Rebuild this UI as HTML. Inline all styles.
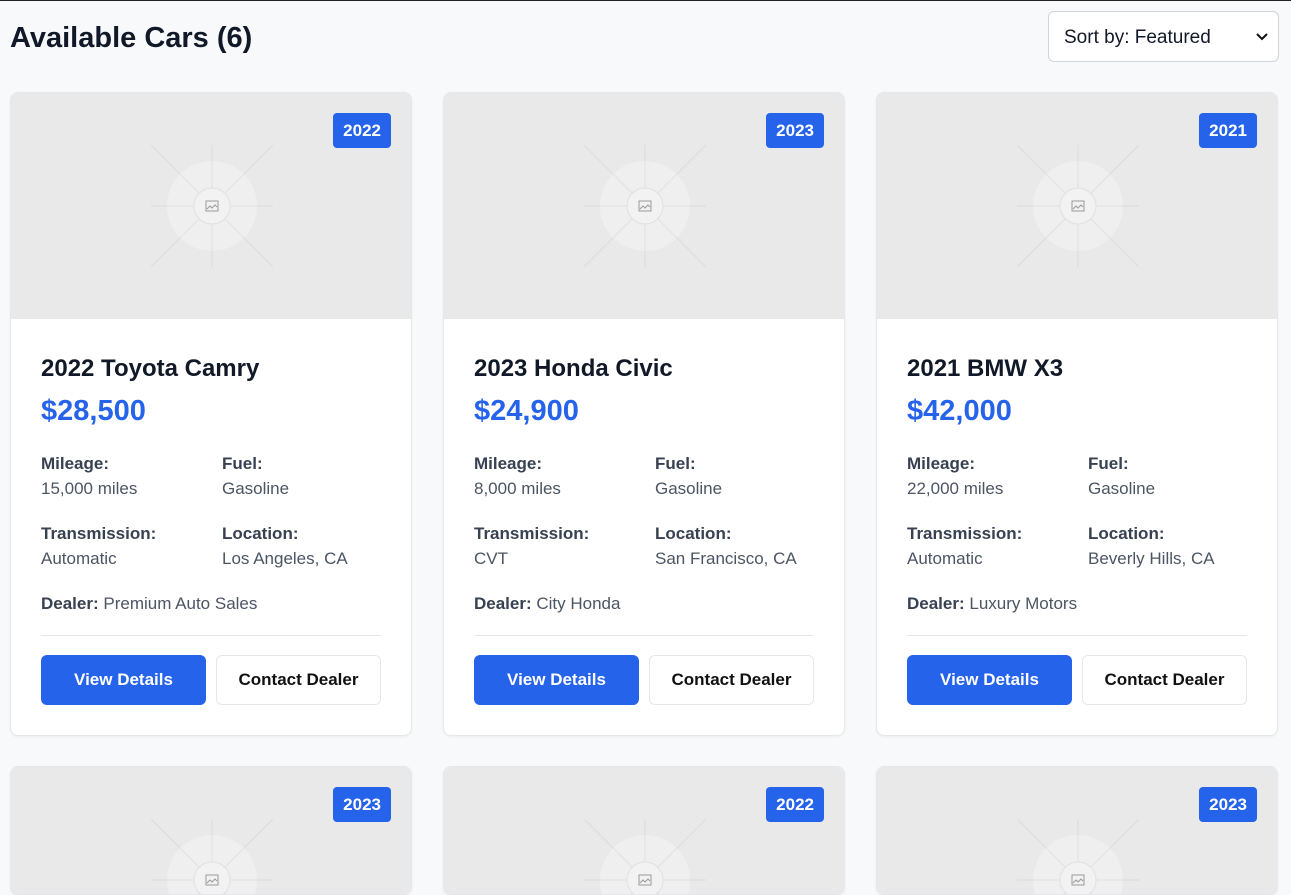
<!DOCTYPE html>
<html style="overflow:hidden;height:895px"><head><style>
*{box-sizing:border-box;margin:0;padding:0}
body{width:1291px;height:895px;overflow:hidden;background:#f8f9fb;font-family:"Liberation Sans",sans-serif;color:#111827;position:relative}
.top{position:absolute;left:0;top:0;width:1291px;height:1px;background:#222}
h1{position:absolute;left:10px;top:22px;font-size:29px;font-weight:bold;color:#111827}
.sort{position:absolute;left:1048px;top:11px;width:231px;height:51px;border:1px solid #d1d5db;border-radius:6px;background:#fff;font-size:19px;padding:15px 15px 0;color:#111827}
.sort svg{position:absolute;right:10px;top:21px}
.card{position:absolute;width:402px;height:644px;background:#fff;border:1px solid #e5e7eb;border-radius:8px;overflow:hidden;box-shadow:0 1px 2px rgba(0,0,0,.05)}
.img{height:226px;background:#e9e9e9;position:relative}
.img svg{position:absolute;left:140px;top:52px}
.badge{position:absolute;right:20px;top:20px;background:#2563eb;color:#fff;font-weight:bold;font-size:17px;padding:8px 10px 7px;border-radius:4px}
.body{padding:0 30px}
.t{font-size:24px;font-weight:bold;margin-top:36px;height:30px}
.p{font-size:29px;font-weight:bold;color:#2563eb;margin-top:10px;height:40px}
.g{display:grid;grid-template-columns:181px 1fr;row-gap:25px;margin-top:19px;font-size:17px;color:#4b5563}
.g b{display:block;color:#374151;margin-bottom:5px}
.d{margin-top:25px;font-size:17px;color:#4b5563}
.d b{color:#374151}
hr{border:none;border-top:1px solid #e5e7eb;margin-top:21px}
.btns{display:flex;gap:10px;margin-top:19px}
.btns div{width:166px;height:50px;border-radius:6px;display:flex;align-items:center;justify-content:center;font-size:17px;font-weight:bold}
.v{background:#2563eb;color:#fff}
.c{background:#fff;border:1px solid #e5e7eb;color:#111}
</style></head><body>
<div class="top"></div>
<h1>Available Cars (6)</h1>
<div class="sort">Sort by: Featured<svg width="12" height="8"><path d="M1 1l5 5 5-5" stroke="#111" stroke-width="2" fill="none"/></svg></div>

<div class="card" style="left:10px;top:92px"><div class="img"><svg width="122" height="122" viewBox="0 0 122 122"><g stroke="#dcdcdc" stroke-width="1" fill="none"><path d="M0 0L122 122M122 0L0 122M61 0V122M0 61H122"/></g><circle cx="61" cy="61" r="45" fill="#efefef"/><g stroke="#e2e2e2"><path d="M29 29L93 93M93 29L29 93M61 16V106M16 61H106"/></g><circle cx="61" cy="61" r="18" fill="#f2f2f2" stroke="#e0e0e0"/><rect x="55" y="56" width="12" height="10" fill="none" stroke="#999" stroke-width="1"/><path d="M56 64l3-3 2 2 3-3 2 2" stroke="#999" fill="none"/></svg><div class="badge">2022</div></div>
<div class="body"><div class="t">2022 Toyota Camry</div><div class="p">$28,500</div>
<div class="g"><div><b>Mileage:</b>15,000 miles</div><div><b>Fuel:</b>Gasoline</div><div><b>Transmission:</b>Automatic</div><div><b>Location:</b>Los Angeles, CA</div></div>
<div class="d"><b>Dealer:</b> Premium Auto Sales</div><hr><div class="btns"><div class="v">View Details</div><div class="c">Contact Dealer</div></div></div></div>

<div class="card" style="left:443px;top:92px"><div class="img"><svg width="122" height="122" viewBox="0 0 122 122"><g stroke="#dcdcdc" stroke-width="1" fill="none"><path d="M0 0L122 122M122 0L0 122M61 0V122M0 61H122"/></g><circle cx="61" cy="61" r="45" fill="#efefef"/><g stroke="#e2e2e2"><path d="M29 29L93 93M93 29L29 93M61 16V106M16 61H106"/></g><circle cx="61" cy="61" r="18" fill="#f2f2f2" stroke="#e0e0e0"/><rect x="55" y="56" width="12" height="10" fill="none" stroke="#999" stroke-width="1"/><path d="M56 64l3-3 2 2 3-3 2 2" stroke="#999" fill="none"/></svg><div class="badge">2023</div></div>
<div class="body"><div class="t">2023 Honda Civic</div><div class="p">$24,900</div>
<div class="g"><div><b>Mileage:</b>8,000 miles</div><div><b>Fuel:</b>Gasoline</div><div><b>Transmission:</b>CVT</div><div><b>Location:</b>San Francisco, CA</div></div>
<div class="d"><b>Dealer:</b> City Honda</div><hr><div class="btns"><div class="v">View Details</div><div class="c">Contact Dealer</div></div></div></div>

<div class="card" style="left:876px;top:92px"><div class="img"><svg width="122" height="122" viewBox="0 0 122 122"><g stroke="#dcdcdc" stroke-width="1" fill="none"><path d="M0 0L122 122M122 0L0 122M61 0V122M0 61H122"/></g><circle cx="61" cy="61" r="45" fill="#efefef"/><g stroke="#e2e2e2"><path d="M29 29L93 93M93 29L29 93M61 16V106M16 61H106"/></g><circle cx="61" cy="61" r="18" fill="#f2f2f2" stroke="#e0e0e0"/><rect x="55" y="56" width="12" height="10" fill="none" stroke="#999" stroke-width="1"/><path d="M56 64l3-3 2 2 3-3 2 2" stroke="#999" fill="none"/></svg><div class="badge">2021</div></div>
<div class="body"><div class="t">2021 BMW X3</div><div class="p">$42,000</div>
<div class="g"><div><b>Mileage:</b>22,000 miles</div><div><b>Fuel:</b>Gasoline</div><div><b>Transmission:</b>Automatic</div><div><b>Location:</b>Beverly Hills, CA</div></div>
<div class="d"><b>Dealer:</b> Luxury Motors</div><hr><div class="btns"><div class="v">View Details</div><div class="c">Contact Dealer</div></div></div></div>

<div class="card" style="left:10px;top:766px;height:129px"><div class="img"><svg width="122" height="122" viewBox="0 0 122 122"><g stroke="#dcdcdc" stroke-width="1" fill="none"><path d="M0 0L122 122M122 0L0 122M61 0V122M0 61H122"/></g><circle cx="61" cy="61" r="45" fill="#efefef"/><g stroke="#e2e2e2"><path d="M29 29L93 93M93 29L29 93M61 16V106M16 61H106"/></g><circle cx="61" cy="61" r="18" fill="#f2f2f2" stroke="#e0e0e0"/><rect x="55" y="56" width="12" height="10" fill="none" stroke="#999"/><path d="M56 64l3-3 2 2 3-3 2 2" stroke="#999" fill="none"/></svg><div class="badge">2023</div></div></div>
<div class="card" style="left:443px;top:766px;height:129px"><div class="img"><svg width="122" height="122" viewBox="0 0 122 122"><g stroke="#dcdcdc" stroke-width="1" fill="none"><path d="M0 0L122 122M122 0L0 122M61 0V122M0 61H122"/></g><circle cx="61" cy="61" r="45" fill="#efefef"/><g stroke="#e2e2e2"><path d="M29 29L93 93M93 29L29 93M61 16V106M16 61H106"/></g><circle cx="61" cy="61" r="18" fill="#f2f2f2" stroke="#e0e0e0"/><rect x="55" y="56" width="12" height="10" fill="none" stroke="#999"/><path d="M56 64l3-3 2 2 3-3 2 2" stroke="#999" fill="none"/></svg><div class="badge">2022</div></div></div>
<div class="card" style="left:876px;top:766px;height:129px"><div class="img"><svg width="122" height="122" viewBox="0 0 122 122"><g stroke="#dcdcdc" stroke-width="1" fill="none"><path d="M0 0L122 122M122 0L0 122M61 0V122M0 61H122"/></g><circle cx="61" cy="61" r="45" fill="#efefef"/><g stroke="#e2e2e2"><path d="M29 29L93 93M93 29L29 93M61 16V106M16 61H106"/></g><circle cx="61" cy="61" r="18" fill="#f2f2f2" stroke="#e0e0e0"/><rect x="55" y="56" width="12" height="10" fill="none" stroke="#999"/><path d="M56 64l3-3 2 2 3-3 2 2" stroke="#999" fill="none"/></svg><div class="badge">2023</div></div></div>
</body></html>
